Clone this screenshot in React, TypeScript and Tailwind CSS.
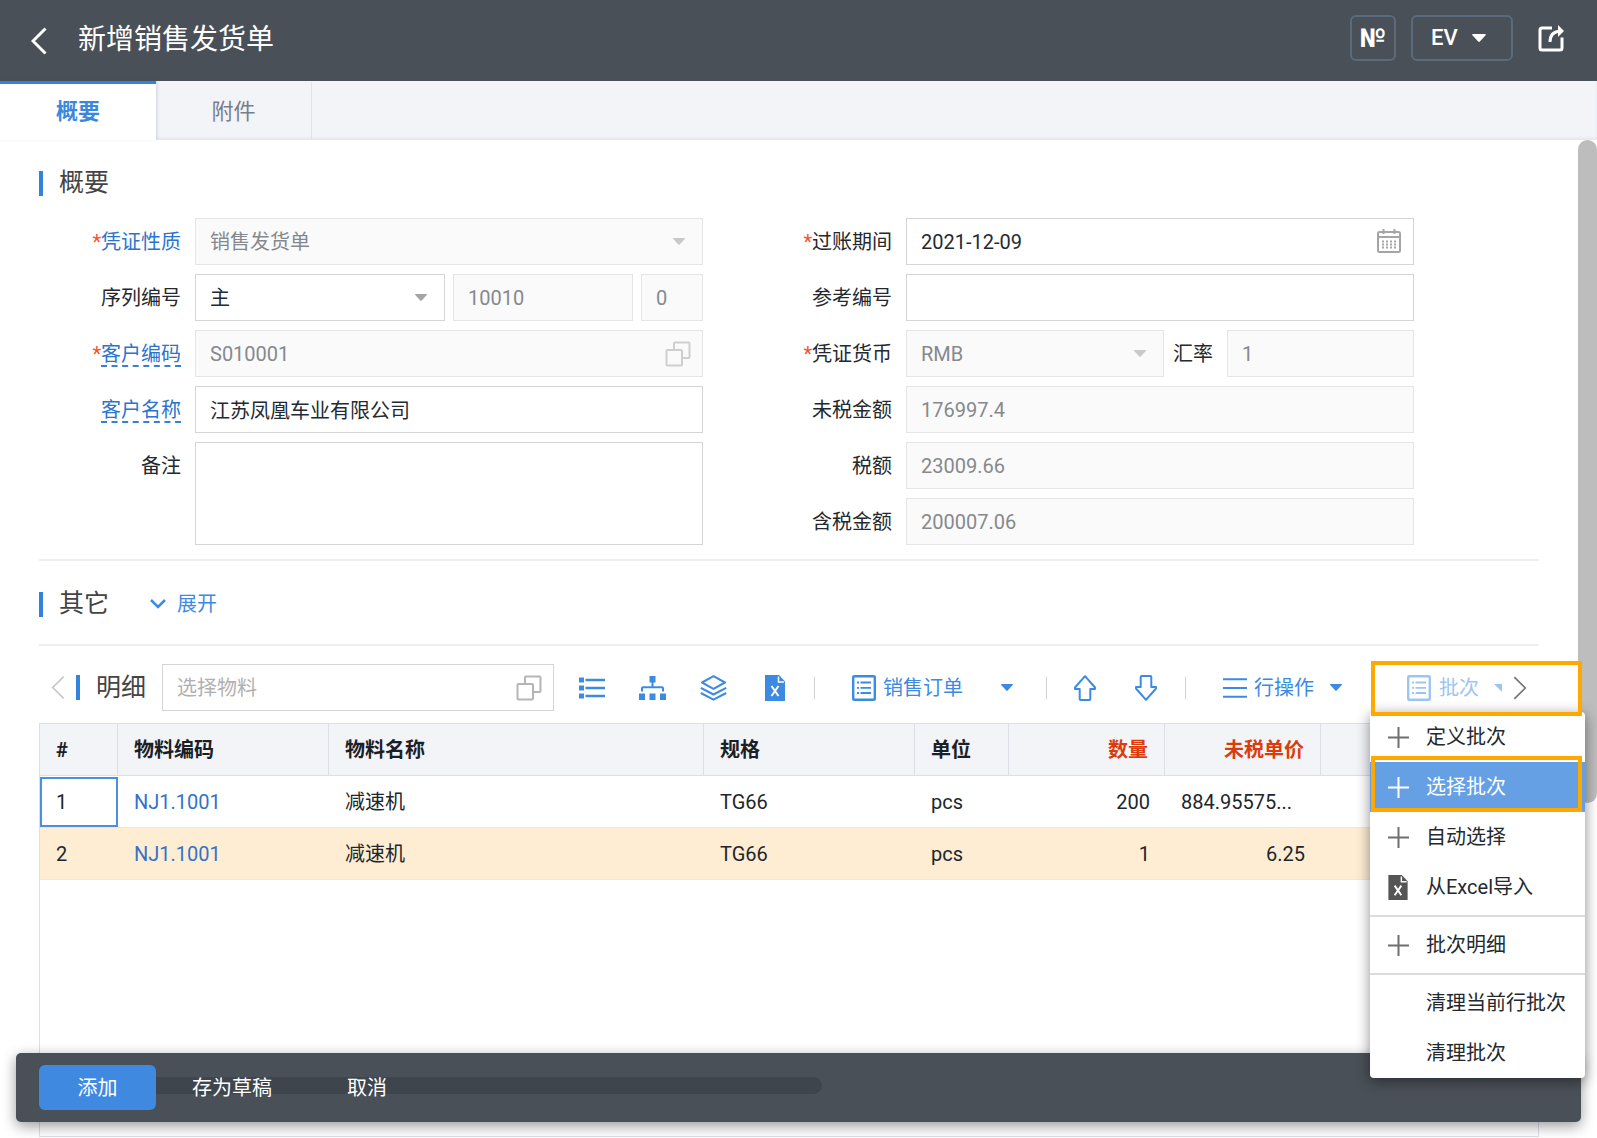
import React, { useState } from 'react';
import clsx from 'clsx';

const FONT = "font-['Roboto','Noto_Sans_CJK_SC',sans-serif]";
const FIELD = 'w-full h-[47px] border px-[14px] text-[20px] leading-[28px] outline-none rounded-none';
const EDITABLE = 'border-[#d4d5d7] bg-white text-[#222b33]';
const LOCKED = 'border-[#e4e5e6] bg-[#fafafa] text-[#85898d]';

const columns = [
  { key: 'no', title: '#', width: 'w-[78px]' },
  { key: 'code', title: '物料编码', width: 'w-[211px]' },
  { key: 'name', title: '物料名称', width: 'w-[375px]' },
  { key: 'spec', title: '规格', width: 'w-[211px]' },
  { key: 'unit', title: '单位', width: 'w-[94px]' },
  { key: 'qty', title: '数量', width: 'w-[156px]', required: true },
  { key: 'price', title: '未税单价', width: 'w-[156px]', required: true },
];

const rows = [
  { no: '1', code: 'NJ1.1001', name: '减速机', spec: 'TG66', unit: 'pcs', qty: '200', price: '884.95575...', long: true },
  { no: '2', code: 'NJ1.1001', name: '减速机', spec: 'TG66', unit: 'pcs', qty: '1', price: '6.25', long: false },
];

const menuGroups = [
  [
    { label: '定义批次', icon: 'plus' },
    { label: '选择批次', icon: 'plus' },
    { label: '自动选择', icon: 'plus' },
    { label: '从Excel导入', icon: 'excel' },
  ],
  [{ label: '批次明细', icon: 'plus' }],
  [
    { label: '清理当前行批次', icon: '' },
    { label: '清理批次', icon: '' },
  ],
];

const Caret = ({ className = '' }) => (
  <svg className={className} width="12" height="7" viewBox="0 0 12 7" fill="currentColor" aria-hidden="true">
    <path d="M0.6 0h10.8c.5 0 .8.6.4 1L6.7 6.6a1 1 0 0 1-1.4 0L.2 1c-.4-.4-.1-1 .4-1z" />
  </svg>
);

const CopyIcon = ({ className = '' }) => (
  <svg className={className} width="26" height="26" viewBox="0 0 26 26" fill="none" stroke="currentColor" strokeWidth="2" aria-hidden="true">
    <rect x="1.5" y="9" width="15.5" height="15.5" rx="1" />
    <path d="M9 9V2.5a1 1 0 0 1 1-1h13.5a1 1 0 0 1 1 1V16a1 1 0 0 1-1 1H17" />
  </svg>
);

const CalendarIcon = ({ className = '' }) => (
  <svg className={className} width="24" height="24" viewBox="0 0 24 24" fill="none" stroke="currentColor" aria-hidden="true">
    <rect x="1" y="3" width="22" height="20" rx="1.5" strokeWidth="2" />
    <path d="M1 8h22" strokeWidth="2" />
    <path d="M6.5 0v5M17.5 0v5" strokeWidth="2" />
    <path d="M5 12.5h14M5 15.5h14M5 18.5h14" strokeWidth="2" strokeDasharray="2 2" />
  </svg>
);

const ExcelIcon = ({ className = '' }) => (
  <svg className={className} width="20" height="26" viewBox="0 0 20 26" aria-hidden="true">
    <path d="M0 0h14l6 6.5V26H0z" fill="currentColor" />
    <path d="M13.5 1.5v5.5h5.5" fill="none" stroke="#fff" strokeWidth="1.5" />
    <path d="M6.5 11l7 10M13.5 11l-7 10" fill="none" stroke="#fff" strokeWidth="2" />
  </svg>
);

const DocListIcon = () => (
  <svg width="24" height="26" viewBox="0 0 24 26" fill="none" stroke="currentColor" strokeWidth="2" aria-hidden="true">
    <rect x="1.2" y="1.2" width="21.6" height="23.6" rx="1" strokeWidth="2.4" />
    <path d="M5 7.5h2M5 12.8h2M5 18h2M8.5 7.5h10.5M8.5 12.8h10.5M8.5 18h10.5" strokeWidth="1.8" />
  </svg>
);

const PlusIcon = () => (
  <svg width="21" height="21" viewBox="0 0 21 21" fill="none" stroke="currentColor" strokeWidth="2" aria-hidden="true">
    <path d="M10.5 0v21M0 10.5h21" />
  </svg>
);

const ListIcon = () => (
  <svg width="26" height="22" viewBox="0 0 26 22" fill="currentColor" aria-hidden="true">
    <path d="M0 .5h5v5H0zM0 8.500h5v5H0zM0 16.500h5v5H0z" />
    <path d="M6.5 1.8h19.5v2.4H6.5zM6.5 9.800h19.5v2.4H6.5zM6.5 17.800h19.5v2.4H6.5z" />
  </svg>
);

const TreeIcon = () => (
  <svg width="27" height="24" viewBox="0 0 27 24" fill="currentColor" aria-hidden="true">
    <path d="M10.5 0h6v6.5h-6zM0 17.5h6V24H0zM10.5 17.5h6V24h-6zM21 17.5h6V24h-6z" />
    <path d="M13.5 6v5.5M3 15.5v-3.2a1 1 0 0 1 1-1h19a1 1 0 0 1 1 1v3.2" fill="none" stroke="currentColor" strokeWidth="2" />
  </svg>
);

const LayersIcon = () => (
  <svg width="27" height="26" viewBox="0 0 27 26" fill="none" stroke="currentColor" strokeWidth="2" strokeLinejoin="round" aria-hidden="true">
    <path d="M13.5 1.2L25 7.5l-11.5 6.300L2 7.5z" />
    <path d="M.8 12.8l12.7 6.7 12.7-6.7M.8 18l12.7 6.700L26.200 18" />
  </svg>
);

const ArrowIcon = ({ className = '' }) => (
  <svg className={className} width="22" height="26" viewBox="0 0 22 26" fill="none" stroke="currentColor" strokeWidth="2" strokeLinejoin="round" aria-hidden="true">
    <path d="M11 1.2L21 12.5v1.5h-4.700v10a1 1 0 0 1-1 1H6.700a1 1 0 0 1-1-1V14H1v-1.500z" />
  </svg>
);

const Chevron = ({ className = '', width = 2 }) => (
  <svg className={className} viewBox="0 0 16 28" fill="none" stroke="currentColor" strokeWidth={width} aria-hidden="true">
    <path d="M14.5 1.5L2 14l12.5 12.5" />
  </svg>
);

type LabelProps = { htmlFor: string; text: string; required?: boolean; link?: boolean; dashed?: boolean; className?: string };

const Label = ({ htmlFor, text, required, link, dashed, className }: LabelProps) => (
  <label
    htmlFor={htmlFor}
    className={clsx('flex h-[47px] items-center justify-end pr-[14px] whitespace-nowrap', link ? 'text-[#2b74cc]' : 'text-[#24292e]', className)}
  >
    {required && <span className="text-[#f5532d]">*</span>}
    <span className={clsx(dashed ? 'border-b-2 border-dashed border-[#3a7fd5] pt-[2px] leading-[22px]' : 'leading-[24px]')}>{text}</span>
  </label>
);

type FieldProps = { id: string; value: string; locked?: boolean; children?: React.ReactNode };

const TextField = ({ id, value, locked, children }: FieldProps) => (
  <div className="relative">
    <input id={id} type="text" defaultValue={value} disabled={locked} className={clsx(FIELD, locked ? LOCKED : EDITABLE)} />
    {children}
  </div>
);

const SelectField = ({ id, value, locked }: FieldProps) => (
  <div className="relative">
    <select id={id} disabled={locked} className={clsx(FIELD, 'appearance-none opacity-100', locked ? LOCKED : EDITABLE)}>
      <option>{value}</option>
    </select>
    <Caret className={clsx('pointer-events-none absolute right-[18px] top-[20px]', locked ? 'text-[#c8c9ca]' : 'text-[#a3a5a7]')} />
  </div>
);

const SectionTitle = ({ children }: { children: React.ReactNode }) => (
  <h2 className="flex items-center gap-4 text-[25px] leading-[36px] text-[#444]">
    <span className="h-[25px] w-1 bg-[#3282e0]" />
    {children}
  </h2>
);

const Divider = () => <span className="h-[22px] w-px bg-[#d0d0d0]" />;

const BatchMenu = ({ active, onSelect }: { active: string; onSelect: (label: string) => void }) => (
  <div role="menu" className="absolute -left-px top-12 z-20 w-[215px] rounded-[4px] bg-white shadow-[0_3px_14px_rgba(0,0,0,0.45)]">
    {menuGroups.map((group, i) => (
      <div key={i} className={clsx(i > 0 && 'border-t-2 border-[#dcdcdc] pt-[3px]', i < menuGroups.length - 1 && 'pb-[3px]')}>
        {group.map(item => (
          <button
            key={item.label}
            type="button"
            role="menuitem"
            onClick={() => onSelect(item.label)}
            className={clsx(
              'flex h-[50px] w-full items-center whitespace-nowrap pl-[18px] text-left',
              item.label === active ? 'bg-[#65a0e5] text-white' : 'text-[#24292e]'
            )}
          >
            <span className={clsx('w-[38px]', item.label === active ? 'text-white' : 'text-[#6f6f6f]')}>
              {item.icon === 'plus' && <PlusIcon />}
              {item.icon === 'excel' && <ExcelIcon className="h-[25px] text-[#555]" />}
            </span>
            {item.label}
          </button>
        ))}
      </div>
    ))}
  </div>
);

const App = () => {
  const [tab, setTab] = useState('概要');
  const [menuOpen, setMenuOpen] = useState(true);
  const [action, setAction] = useState('选择批次');

  return (
    <div className={clsx('relative flex h-screen flex-col overflow-hidden bg-white text-[20px] leading-[28px]', FONT)}>
      {/* Title bar */}
      <header className="flex h-[81px] shrink-0 items-center bg-[#495057] pb-[5px] pl-[31px] pr-[33px] text-white">
        <button type="button" aria-label="返回" className="mt-[6px]">
          <Chevron className="h-7 w-4" width={3} />
        </button>
        <h1 className="ml-[31px] pt-1 text-[28px] leading-[40px]">新增销售发货单</h1>
        <div className="ml-auto flex items-center">
          <button type="button" className="h-[46px] w-[46px] rounded-[6px] border-2 border-[#5b6b7b] text-[26px] font-bold">№</button>
          <button type="button" className="ml-[15px] flex h-[46px] w-[102px] items-center gap-[14px] rounded-[6px] border-2 border-[#5b6b7b] pl-[18px] text-[22px] font-medium">
            EV
            <Caret className="h-2 w-[14px]" />
          </button>
          <button type="button" aria-label="分享" className="ml-[25px]">
            <svg width="26" height="27" viewBox="0 0 26 27" fill="none" stroke="currentColor" strokeWidth="3">
              <path d="M14 3H4a2 2 0 0 0-2 2v18a2 2 0 0 0 2 2h18a2 2 0 0 0 2-2V12.500" />
              <path d="M12 17c0-6 2.500-10.500 10-10.800" />
              <path d="M20 0l6 6-6 6z" fill="currentColor" stroke="none" />
            </svg>
          </button>
        </div>
      </header>

      <nav className="flex h-[59px] shrink-0 bg-[#f2f4f8] text-[22px] shadow-[inset_0_-2px_3px_rgba(60,80,110,0.08)]">
        {['概要', '附件'].map(name => (
          <button
            key={name}
            type="button"
            onClick={() => setTab(name)}
            className={clsx(
              'h-full w-[156px] border-t-[3px]',
              tab === name
                ? 'border-t-[#3282e0] bg-white font-bold text-[#3a87e0] shadow-[1px_-1px_3px_rgba(60,80,110,0.2)]'
                : 'border-r border-r-[#dfe2e7] border-t-transparent text-[#76808b]'
            )}
          >
            {name}
          </button>
        ))}
      </nav>

      <main className="relative flex flex-1 flex-col pb-px pl-[39px] pr-[58px] pt-[25px]">
        <SectionTitle>概要</SectionTitle>

        <form className="mt-[17px] grid grid-cols-[156px_1fr_203px_1fr] gap-y-[9px] border-b-2 border-[#efefef] pb-[14px] pr-[125px]">
          <Label htmlFor="nature" text="凭证性质" required link />
          <SelectField id="nature" value="销售发货单" locked />
          <Label htmlFor="period" text="过账期间" required />
          <TextField id="period" value="2021-12-09">
            <CalendarIcon className="pointer-events-none absolute right-[13px] top-[11px] text-[#a5a5a5]" />
          </TextField>

          <Label htmlFor="series" text="序列编号" />
          <div className="grid grid-cols-[250fr_180fr_62fr] gap-2">
            <SelectField id="series" value="主" />
            <input type="text" aria-label="编号" defaultValue="10010" disabled className={clsx(FIELD, LOCKED)} />
            <input type="text" aria-label="子编号" defaultValue="0" disabled className={clsx(FIELD, LOCKED)} />
          </div>
          <Label htmlFor="ref" text="参考编号" />
          <TextField id="ref" value="" />

          <Label htmlFor="customer" text="客户编码" required link dashed />
          <TextField id="customer" value="S010001" locked>
            <CopyIcon className="absolute right-3 top-[11px] text-[#cfcfcf]" />
          </TextField>
          <Label htmlFor="currency" text="凭证货币" required />
          <div className="grid grid-cols-[258fr_63px_187fr]">
            <SelectField id="currency" value="RMB" locked />
            <Label htmlFor="rate" text="汇率" />
            <TextField id="rate" value="1" locked />
          </div>

          <Label htmlFor="customerName" text="客户名称" link dashed />
          <TextField id="customerName" value="江苏凤凰车业有限公司" />
          <Label htmlFor="net" text="未税金额" />
          <TextField id="net" value="176997.4" locked />

          <Label htmlFor="remark" text="备注" className="row-span-2" />
          <textarea id="remark" className={clsx('row-span-2 w-full resize-none border px-[14px] py-2 outline-none', EDITABLE)} />
          <Label htmlFor="tax" text="税额" />
          <TextField id="tax" value="23009.66" locked />
          <Label htmlFor="gross" text="含税金额" />
          <TextField id="gross" value="200007.06" locked />
        </form>

        <div className="flex items-center gap-[41px] border-b-2 border-[#efefef] pb-[22px] pt-[25px]">
          <SectionTitle>其它</SectionTitle>
          <button type="button" className="flex items-center gap-[11px] text-[#3d8ae3]">
            <svg width="16" height="10" viewBox="0 0 16 10" fill="none" stroke="currentColor" strokeWidth="2.5">
              <path d="M1 1l7 7 7-7" />
            </svg>
            展开
          </button>
        </div>

        {/* Detail toolbar */}
        <div className="mb-3 mt-[18px] flex h-[47px] items-center pl-3 text-[#3d8ae3]">
          <button type="button" aria-label="向左" className="mr-[11px] text-[#c9c9c9]">
            <Chevron className="h-[27px] w-[14px]" />
          </button>
          <SectionTitle>明细</SectionTitle>
          <div className="relative ml-4 min-w-0 flex-1">
            <input type="text" aria-label="选择物料" placeholder="选择物料" className={clsx(FIELD, EDITABLE, 'placeholder:text-[#b0b0b0]')} />
            <CopyIcon className="absolute right-3 top-[11px] text-[#b5b5b5]" />
          </div>
          <div className="ml-[25px] flex items-center gap-[34px]">
            <button type="button" aria-label="列表"><ListIcon /></button>
            <button type="button" aria-label="层级"><TreeIcon /></button>
            <button type="button" aria-label="图层"><LayersIcon /></button>
          </div>
          <button type="button" aria-label="导出Excel" className="ml-[38px] mr-[29px]"><ExcelIcon /></button>
          <Divider />
          <button type="button" className="ml-[37px] mr-[33px] flex items-center gap-[7px] whitespace-nowrap">
            <DocListIcon />
            销售订单
            <Caret className="ml-[31px]" />
          </button>
          <Divider />
          <button type="button" aria-label="上移" className="ml-[27px]"><ArrowIcon /></button>
          <button type="button" aria-label="下移" className="ml-[39px] mr-7"><ArrowIcon className="rotate-180" /></button>
          <Divider />
          <button type="button" className="ml-[37px] mr-[29px] flex items-center gap-[7px] whitespace-nowrap">
            <svg width="24" height="20" viewBox="0 0 24 20" stroke="currentColor" strokeWidth="2">
              <path d="M0 1.2h24M0 10h24M0 18.8h24" />
            </svg>
            行操作
            <Caret className="ml-[9px]" />
          </button>
          <div className="relative flex h-full w-[168px] shrink-0 items-center pl-9">
            <button type="button" onClick={() => setMenuOpen(!menuOpen)} className="flex items-center gap-2 whitespace-nowrap text-[#9dc5f1]">
              <DocListIcon />
              批次
              <svg className="ml-[7px]" width="8" height="8" viewBox="0 0 8 8" fill="currentColor">
                <path d="M0 0h8v8z" />
              </svg>
            </button>
            <button type="button" aria-label="向右" className="ml-[11px] text-[#777]">
              <Chevron className="h-[26px] w-[14px] rotate-180" width={2} />
            </button>
            {menuOpen && <BatchMenu active={action} onSelect={setAction} />}
            {/* Highlight frames over the button and the chosen entry */}
            <div className="pointer-events-none absolute left-0 -top-[3px] z-30 h-[55px] w-[211px] border-4 border-[#ffa800]" />
            <div className="pointer-events-none absolute left-0 top-[92px] z-30 h-[56px] w-[211px] border-4 border-[#ffa800]" />
          </div>
        </div>

        <div className="flex-1 border border-[#dcdfe6]">
          <table className="w-full table-fixed border-separate border-spacing-0">
            <thead>
              <tr className="h-[52px] bg-[#f2f4f8] text-left">
                {columns.map(col => (
                  <th
                    key={col.key}
                    className={clsx('border-b border-r border-[#dcdfe6] px-4 font-bold', col.width, col.required ? 'text-right text-[#dc3c0c]' : 'text-[#1b2026]')}
                  >
                    {col.title}
                  </th>
                ))}
                <th className="border-b border-[#dcdfe6]" />
              </tr>
            </thead>
            <tbody className="text-[#20262c]">
              {rows.map((row, i) => (
                <tr key={row.no} className={clsx('h-[52px]', i === 1 && 'bg-[#ffedd3]')}>
                  <td className={clsx('border-b border-[#f5e7cf]', i === 0 ? 'p-0' : 'px-4')}>
                    {i === 0 ? <div className="flex h-[50px] items-center border-2 border-[#4a90e2] px-[14px]">{row.no}</div> : row.no}
                  </td>
                  <td className="border-b border-[#f5e7cf] px-4">
                    <a href="#item" className="text-[#3273c8]">{row.code}</a>
                  </td>
                  <td className="border-b border-[#f5e7cf] px-4">{row.name}</td>
                  <td className="border-b border-[#f5e7cf] px-4">{row.spec}</td>
                  <td className="border-b border-[#f5e7cf] px-4">{row.unit}</td>
                  <td className="border-b border-[#f5e7cf] px-[15px] text-right">{row.qty}</td>
                  <td className={clsx('border-b border-[#f5e7cf] px-4', !row.long && 'text-right')}>{row.price}</td>
                  <td className="border-b border-[#f5e7cf]" />
                </tr>
              ))}
            </tbody>
          </table>
        </div>

        <div className="absolute right-0 top-0 h-[663px] w-[19px] rounded-[10px] bg-[#bdbdbd]" />
      </main>

      {/* Action bar */}
      <footer className="absolute inset-x-4 bottom-4 z-10 flex h-[69px] items-center rounded-[5px] bg-[#495057] pl-[23px] text-white shadow-[0_4px_14px_rgba(0,0,0,0.4)]">
        <div className="absolute left-[23px] top-6 h-[17px] w-[783px] rounded-r-[9px] bg-[#3e454c]" />
        <button type="button" className="relative h-[45px] w-[117px] rounded-[6px] bg-[#3f8ae0]">添加</button>
        <button type="button" className="relative ml-9">存为草稿</button>
        <button type="button" className="relative ml-[75px]">取消</button>
      </footer>
    </div>
  );
};

export default App;
